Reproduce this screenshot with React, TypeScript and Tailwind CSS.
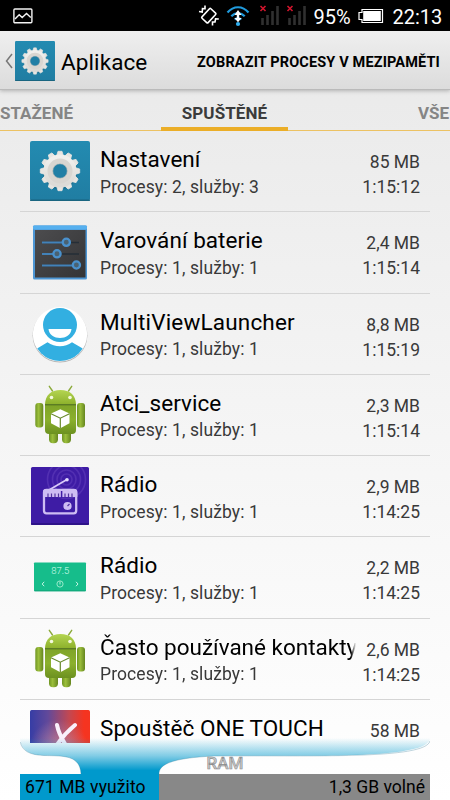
import type { ReactNode } from 'react';

type AppInfo = {
  name: string;
  services: string;
  size: string;
  time: string;
  icon: ReactNode;
  nameClass?: string;
}

function Gear({ className }: { className: string }) {
  const teeth = Array.from({ length: 12 }, (_, i) => i * 30);
  return (
    <svg viewBox="0 0 60 60" className={className}>
      <defs>
        <linearGradient id="gearBg" x1="0" y1="0" x2="0" y2="1">
          <stop offset="0" stopColor="#238bb1" />
          <stop offset="1" stopColor="#207da2" />
        </linearGradient>
        <linearGradient id="gearFill" x1="0" y1="0" x2="0" y2="1">
          <stop offset="0" stopColor="#f0efec" />
          <stop offset="1" stopColor="#dddbd7" />
        </linearGradient>
      </defs>
      <rect width="60" height="60" rx="2" fill="url(#gearBg)" />
      <rect y="58.5" width="60" height="1.5" rx="0.7" fill="#196580" />
      <circle cx="30" cy="31" r="17.5" fill="#14506a" opacity="0.3" />
      {teeth.map((a) => (
        <path key={a} d="M26.6 15 L28 10.3 H32 L33.4 15Z" fill="#e7e5e1" stroke="#e7e5e1" strokeWidth="0.8" strokeLinejoin="round" transform={`rotate(${a} 30 30)`} />
      ))}
      <circle cx="30" cy="30" r="11.8" fill="none" stroke="url(#gearFill)" strokeWidth="9.4" />
      <circle cx="30" cy="30" r="10" fill="none" stroke="#d9d6d1" strokeWidth="5" />
      <circle cx="30" cy="30" r="7.3" fill="#217fa5" stroke="#c3bfb8" strokeWidth="0.7" />
    </svg>
  );
}

function Sliders() {
  return (
    <svg viewBox="0 0 60 60" className="size-[60px]">
      <defs>
        <linearGradient id="panel" x1="0" y1="0" x2="1" y2="1">
          <stop offset="0" stopColor="#4c4c4e" />
          <stop offset="1" stopColor="#343436" />
        </linearGradient>
      </defs>
      <rect x="3" y="3.5" width="54" height="54" rx="1.5" fill="#4d96d4" />
      <rect x="3" y="3.5" width="54" height="4" rx="1" fill="#56b0ef" />
      <rect x="5" y="8" width="50.5" height="47.5" fill="url(#panel)" />
      <path d="M12 20.5H49M12 32H49M12 43.5H49" stroke="#252e37" strokeWidth="1.4" />
      <path d="M12 20.5H32M12 32H23M12 43.5H42" stroke="#4282b9" strokeWidth="1.9" />
      <g fill="#4a6272" stroke="#4a91cd" strokeWidth="2.3">
        <circle cx="36.3" cy="20.3" r="3.6" />
        <circle cx="27" cy="31.8" r="3.6" />
        <circle cx="46.4" cy="43" r="3.6" />
      </g>
    </svg>
  );
}

function Smiley() {
  return (
    <svg viewBox="0 0 60 60" className="size-[60px]">
      <clipPath id="face"><circle cx="30" cy="30.3" r="26.8" /></clipPath>
      <circle cx="30" cy="31.2" r="27.4" fill="#b5b5b5" />
      <circle cx="30" cy="30.3" r="27.2" fill="#fff" />
      <circle cx="30" cy="21" r="17" fill="#32afe1" />
      <path d="M18.5 25H41.5C40.5 37 19.5 37 18.5 25Z" fill="#fff" />
      <path d="M3 47L17.5 38.3C25 43.5 35 43.5 42 38.3L57 47V60H3Z" fill="#32afe1" clipPath="url(#face)" />
    </svg>
  );
}

function Robot() {
  return (
    <svg viewBox="0 0 60 60" className="size-[60px]">
      <defs>
        <linearGradient id="bot" x1="0" y1="0" x2="0" y2="1">
          <stop offset="0" stopColor="#7fa428" />
          <stop offset="0.5" stopColor="#8bb02d" />
          <stop offset="1" stopColor="#6c9120" />
        </linearGradient>
        <linearGradient id="head" x1="0" y1="0" x2="0" y2="1">
          <stop offset="0" stopColor="#b4d551" />
          <stop offset="1" stopColor="#8db12c" />
        </linearGradient>
        <linearGradient id="limb" x1="0" y1="0" x2="1" y2="0">
          <stop offset="0" stopColor="#6f9523" />
          <stop offset="0.4" stopColor="#9bbe3b" />
          <stop offset="1" stopColor="#65861f" />
        </linearGradient>
      </defs>
      <path d="M22.5 6L19.3 1.3M38.5 6L41.7 1.3" stroke="#8baa3a" strokeWidth="1.4" strokeLinecap="round" />
      <rect x="19" y="42" width="9" height="16.3" rx="4" fill="url(#limb)" />
      <rect x="32" y="42" width="9" height="16.3" rx="4" fill="url(#limb)" />
      <rect x="5.3" y="18" width="8" height="24.5" rx="3" fill="url(#limb)" />
      <rect x="47" y="18" width="8" height="24.5" rx="3" fill="url(#limb)" />
      <path d="M15 20H46V45Q46 49 42 49H19Q15 49 15 45Z" fill="url(#bot)" />
      <path d="M15 19.3C15.3 10 21 5 30.5 5S45.7 10 46 19.3Z" fill="url(#head)" />
      <path d="M15 19.7H46" stroke="#55761c" strokeWidth="1.3" />
      <circle cx="21.5" cy="12.5" r="1.8" fill="#f3f8dd" />
      <circle cx="40" cy="12.5" r="1.8" fill="#f3f8dd" />
      <path d="M30.3 24.2L39.5 28.6V38.2L30.3 43.3L21 38.2V28.6Z" fill="#fff" />
      <path d="M21 28.8L30.3 33.2L39.5 28.8M30.3 33.2V43.3" fill="none" stroke="#688a2a" strokeWidth="1.2" />
    </svg>
  );
}

function RadioPurple() {
  return (
    <svg viewBox="0 0 60 60" className="size-[60px]">
      <rect x="1" y="1" width="58" height="58" rx="1.5" fill="#3e1ca5" />
      <path d="M1 58H59" stroke="#2a1180" strokeWidth="1.5" />
      <clipPath id="rad"><rect x="1" y="1" width="58" height="58" /></clipPath>
      <g fill="none" stroke="#6340bd" strokeWidth="1.6" opacity="0.55" clipPath="url(#rad)">
        <circle cx="36.5" cy="13.5" r="5.5" />
        <circle cx="36.5" cy="13.5" r="9.5" />
        <circle cx="36.5" cy="13.5" r="14" />
        <circle cx="36.5" cy="13.5" r="19" />
      </g>
      <path d="M19 24L37 13.5" stroke="#d9cbf8" strokeWidth="1.7" />
      <circle cx="37" cy="13.8" r="1.8" fill="#e4daff" />
      <rect x="14" y="24" width="32.2" height="23.3" rx="2.5" fill="none" stroke="#cebdf3" strokeWidth="2.3" />
      <path d="M13 31V26Q13 23 16 23H44.3Q47.3 23 47.3 26V31Z" fill="#cebdf3" />
      <path d="M18 27.5V31M21.5 27.5V31M25 27.5V31M28.5 27.5V31M35 27.5V31M38.5 27.5V31M42 27.5V31" stroke="#55369f" strokeWidth="1.2" />
      <path d="M31.6 25V32" stroke="#3e1ca5" strokeWidth="1.5" />
      <circle cx="37.5" cy="40" r="4.1" fill="#cebdf3" />
      <path d="M37.5 40L39.5 38" stroke="#5435a4" strokeWidth="1.3" />
    </svg>
  );
}

function RadioGreen() {
  return (
    <svg viewBox="0 0 60 60" className="size-[60px]">
      <rect x="4" y="15.5" width="52" height="28.7" rx="0.8" fill="#16bd8b" />
      <path d="M4.5 43.8H55.5" stroke="#109e74" strokeWidth="0.8" />
      <text x="30.3" y="27" textAnchor="middle" fontSize="9.5" fill="#d6fff0" fontFamily="Roboto, sans-serif" fontWeight="300">87.5</text>
      <path d="M14.2 34.8L12.2 37L14.2 39.2M46 34.8L48 37L46 39.2" fill="none" stroke="#c4f6e4" strokeWidth="1" />
      <circle cx="30" cy="37" r="3.1" fill="none" stroke="#a4edcf" strokeWidth="0.9" />
      <path d="M30 34.5V37.5" stroke="#c4f6e4" strokeWidth="0.9" />
    </svg>
  );
}

function OneTouch() {
  return (
    <svg viewBox="0 0 60 60" className="size-[60px]">
      <defs>
        <linearGradient id="touch" x1="0" y1="0" x2="1" y2="0">
          <stop offset="0" stopColor="#363da5" />
          <stop offset="0.3" stopColor="#62499a" />
          <stop offset="0.65" stopColor="#c24852" />
          <stop offset="0.9" stopColor="#f53420" />
        </linearGradient>
        <radialGradient id="glow" cx="0.48" cy="0.65" r="0.5">
          <stop offset="0" stopColor="#c98ea5" stopOpacity="0.75" />
          <stop offset="1" stopColor="#c98ea5" stopOpacity="0" />
        </radialGradient>
      </defs>
      <rect width="60" height="60" rx="1.5" fill="url(#touch)" />
      <rect width="60" height="60" rx="1.5" fill="url(#glow)" />
      <path d="M27 15Q29 25 37 37M45 15Q32 26 25 38" fill="none" stroke="#f9effa" strokeWidth="4" strokeLinecap="round" />
    </svg>
  );
}

const apps: AppInfo[] = [
  { name: 'Nastavení', services: 'Procesy: 2, služby: 3', size: '85 MB', time: '1:15:12', icon: <Gear className="size-[60px]" /> },
  { name: 'Varování baterie', services: 'Procesy: 1, služby: 1', size: '2,4 MB', time: '1:15:14', icon: <Sliders /> },
  { name: 'MultiViewLauncher', services: 'Procesy: 1, služby: 1', size: '8,8 MB', time: '1:15:19', icon: <Smiley />, nameClass: 'tracking-[0.17px]' },
  { name: 'Atci_service', services: 'Procesy: 1, služby: 1', size: '2,3 MB', time: '1:15:14', icon: <Robot /> },
  { name: 'Rádio', services: 'Procesy: 1, služby: 1', size: '2,9 MB', time: '1:14:25', icon: <RadioPurple /> },
  { name: 'Rádio', services: 'Procesy: 1, služby: 1', size: '2,2 MB', time: '1:14:25', icon: <RadioGreen /> },
  { name: 'Často používané kontakty', services: 'Procesy: 1, služby: 1', size: '2,6 MB', time: '1:14:25', icon: <Robot />, nameClass: '[mask-image:linear-gradient(to_right,black_98%,transparent)]' },
  { name: 'Spouštěč ONE TOUCH', services: '', size: '58 MB', time: '', icon: <OneTouch /> },
];

function Signal() {
  return (
    <svg viewBox="0 0 22 22" className="h-[22px] w-[22px]">
      <path d="M2 20V13M7 20V10M12 20V6M17 20V1" transform="translate(1.5 0)" stroke="#303030" strokeWidth="2.6" />
      <path d="M1.5 1L6.5 6M6.5 1L1.5 6" stroke="#d2152d" strokeWidth="1.6" />
    </svg>
  );
}

function StatusBar() {
  return (
    <div className="flex h-[31px] shrink-0 items-center bg-black text-[20px] text-white">
      <svg viewBox="0 0 20 16" className="ml-[12.5px] h-4 w-5" fill="none" stroke="#f4f4f4" strokeWidth="1.4">
        <rect x="0.9" y="1" width="18" height="13.7" rx="1" />
        <path d="M2 11L6.2 6.7L9.2 9.5L13.5 5.5L17.8 9.5" />
      </svg>
      <svg viewBox="0 0 22 22" className="ml-[165px] h-[22px] w-[22px]" fill="none" stroke="#fff" strokeWidth="1.6">
        <rect x="6.6" y="4.2" width="8.4" height="13" rx="1" transform="rotate(43 10.8 10.7)" />
        <path d="M7 0.5V3.7L4.5 3.5L4.2 7L1 6.5M20.8 14L17.6 13.8L17 17H14.5V20.5" />
      </svg>
      <svg viewBox="0 0 24 22" className="ml-[6px] h-[22px] w-6" fill="none">
        <path d="M1.5 7.5C7.5 0.5 16.5 0.5 22.5 7.5M5.3 11.3C9 7.2 15 7.2 18.7 11.3" stroke="#209bdd" strokeWidth="2.2" />
        <path d="M8.7 14.5Q12 11.5 15.3 14.5" stroke="#209bdd" strokeWidth="2" />
        <path d="M12 5L15.5 10H13.2V13H15.5L12 17.3L8.5 13H10.8V10H8.5Z" fill="#fff" />
        <circle cx="12" cy="19" r="2.1" fill="#30afef" />
      </svg>
      <div className="ml-[9px] flex gap-[5px]">
        <Signal />
        <Signal />
      </div>
      <span className="ml-[6px] mt-0.5 w-[38px] whitespace-nowrap text-[20px]">95%</span>
      <svg viewBox="0 0 26 16" className="ml-[6px] h-4 w-[26px]">
        <path d="M4 1.5H24.5V14.5H4V11.5H1V4.5H4Z" fill="none" stroke="#fff" strokeWidth="1.2" />
        <rect x="5.2" y="3" width="17.6" height="10" fill="#fff" />
      </svg>
      <span className="ml-[9px] mt-0.5 whitespace-nowrap">22:13</span>
    </div>
  );
}

function ActionBar() {
  return (
    <div className="relative z-10 flex h-[59px] shrink-0 items-center border-b border-[#bababa] bg-gradient-to-b from-[#efefef] to-[#dcdcdc] pt-[2px] shadow-[0_1px_4px_rgba(0,0,0,0.25)]">
      <svg viewBox="0 0 8 16" className="ml-[5px] h-4 w-2" fill="none" stroke="#777" strokeWidth="1.5">
        <path d="M7 1L1.5 8L7 15" />
      </svg>
      <Gear className="ml-[2px] size-10" />
      <span className="ml-[6px] pt-[3px] text-[22.5px] tracking-[0.1px] text-black">Aplikace</span>
      <span className="ml-auto mr-[10px] whitespace-nowrap pt-[3px] text-[14.5px] font-bold tracking-[0.14px] text-black">ZOBRAZIT PROCESY V MEZIPAMĚTI</span>
    </div>
  );
}

function Tabs() {
  return (
    <div className="flex h-[41px] shrink-0 justify-between border-b border-[#ecc263] text-[17px] font-bold text-[#858585]">
      <div className="w-[161px] pt-[11px]">STAŽENÉ</div>
      <div className="-mb-px w-[127px] border-b-4 border-[#ebae28] pt-[11px] text-center tracking-[0.1px] text-[#3b3b3b]">SPUŠTĚNÉ</div>
      <div className="w-[162px] overflow-hidden whitespace-nowrap pl-[130px] pt-[11px]">VŠE</div>
    </div>
  );
}

function AppRow({ app }: { app: AppInfo }) {
  return (
    <div className="flex h-[81.25px] shrink-0 border-b border-[#d5d5d5] pl-[10px] pr-[10px] pt-[10px]">
      {app.icon}
      <div className={`ml-[10px] w-[256px] overflow-hidden ${app.nameClass ?? 'tracking-[0.05px]'}`}>
        <div className="mt-[4px] whitespace-nowrap text-[22.5px] leading-[29.5px] text-black">{app.name}</div>
        <div className="mt-px whitespace-nowrap text-[17.5px] leading-[22px] tracking-[0.1px] text-[#393939]">{app.services}</div>
      </div>
      <div className="ml-auto mt-[9px] whitespace-nowrap text-right text-[17.5px] leading-[25px] text-[#393939]">
        <div>{app.size}</div>
        <div>{app.time}</div>
      </div>
    </div>
  );
}

function RamFooter() {
  return (
    <div className="relative mx-5 shrink-0 pt-[31px]">
      {/* blue funnel flowing from the list into the used part of the bar */}
      <svg viewBox="0 0 410 36" className="absolute -top-[5px] left-0 h-9 w-[410px]">
        <defs>
          <linearGradient id="flow" gradientUnits="userSpaceOnUse" x1="0" y1="0" x2="0" y2="36">
            <stop offset="0" stopColor="#0099cc" stopOpacity="0" />
            <stop offset="0.5" stopColor="#0099cc" stopOpacity="0.5" />
            <stop offset="0.9" stopColor="#0099cc" />
          </linearGradient>
        </defs>
        <path d="M0 0C1 13 10 17 24 17.5C44 18 60 17 61 36H139C139 28 147 20 195 18C290 17 410 22 410 0Z" fill="url(#flow)" />
        <path d="M0.3 4C2 13 10 17 24 17.5C44 18 60 17 61 36M139 36C139 28 147 20 195 18C290 17 405 22 410 3" fill="none" stroke="#397f9a" strokeOpacity="0.4" strokeWidth="0.8" />
      </svg>
      <div className="absolute left-0 top-[10px] w-full text-center text-[17px] font-medium leading-5 text-[#c9c9c9] [-webkit-text-stroke:0.6px_#8b8b8b]">RAM</div>
      <div className="flex h-[26px] whitespace-nowrap text-[17.5px] leading-[27px] text-black">
        <div className="w-[139px] bg-[#0099cc] pl-[5px] tracking-[0.1px]">671 MB využito</div>
        <div className="flex-1 bg-[#888] pr-[5px] text-right">1,3 GB volné</div>
      </div>
    </div>
  );
}

export default function App() {
  return (
    <div className="flex h-[800px] w-[450px] flex-col overflow-hidden bg-gradient-to-b from-[#e8e8e8] via-[#f4f4f4] to-white font-[Roboto,sans-serif]">
      <StatusBar />
      <ActionBar />
      <Tabs />
      <div className="mx-5 flex min-h-0 flex-1 flex-col overflow-hidden">
        {apps.map((app, i) => <AppRow key={i} app={app} />)}
      </div>
      <RamFooter />
    </div>
  );
}
